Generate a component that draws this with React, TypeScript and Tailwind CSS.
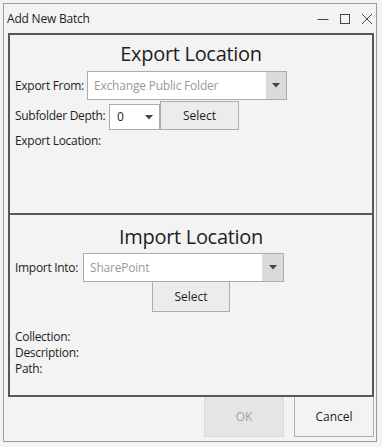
import React from "react";

const font = { fontFamily: '"Open Sans", "Noto Sans", sans-serif' };

function Arrow() {
  return (
    <svg width="8" height="5" viewBox="0 0 8 5">
      <path d="M0 0 L8 0 L4 4.5 Z" fill="#444" />
    </svg>
  );
}

export default function App() {
  return (
    <div
      className="w-[382px] h-[447px] bg-[#f3f3f3] pt-[3px] pl-[3px] text-[12px] text-[#1e1e1e] leading-[16px]"
      style={font}
    >
      <div className="w-[374px] h-[439px] border border-[#9c9c9c] flex flex-col">
        {/* title bar */}
        <div className="h-[29px] flex items-center pl-[3px] pr-[2px]">
          <span className="text-[12px] tracking-[-0.2px]">Add New Batch</span>
          <div className="ml-auto flex items-center gap-[10px] pr-[1px]">
            <svg width="12" height="12" viewBox="0 0 12 12">
              <path d="M0.5 6.5 H11.5" stroke="#444" strokeWidth="1" />
            </svg>
            <svg width="12" height="12" viewBox="0 0 12 12">
              <rect x="1.5" y="1.5" width="9" height="9" fill="none" stroke="#444" strokeWidth="1" />
            </svg>
            <svg width="12" height="12" viewBox="0 0 12 12">
              <path d="M1 1 L11 11 M11 1 L1 11" stroke="#444" strokeWidth="1" />
            </svg>
          </div>
        </div>

        {/* panel */}
        <div className="ml-[4px] w-[366px] border-2 border-[#575757] flex flex-col">
          {/* export */}
          <div className="h-[178px] flex flex-col pl-[5px]">
            <div className="h-[28px] mt-[5px] flex items-center justify-center text-[20px] leading-[28px] tracking-[-0.3px] pr-[5px]">
              Export Location
            </div>
            <div className="mt-[3px] flex items-center">
              <span className="w-[72px] tracking-[-0.3px]">Export From:</span>
              <div className="w-[200px] h-[29px] bg-white border border-[#acacac] flex items-stretch">
                <div className="flex-1 flex items-center pl-[6px] text-[#9a9a9a] tracking-[-0.2px]">
                  Exchange Public Folder
                </div>
                <div className="w-[20px] bg-[#dadada] flex items-center justify-center">
                  <Arrow />
                </div>
              </div>
            </div>
            <div className="mt-[1px] flex items-center">
              <span className="w-[94px] tracking-[-0.3px]">Subfolder Depth:</span>
              <div className="w-[51px] h-[26px] mt-[3px] bg-white border border-[#acacac] flex items-center pl-[7px] pr-[6px]">
                <span>0</span>
                <span className="ml-auto flex items-center">
                  <Arrow />
                </span>
              </div>
              <div className="w-[79px] h-[29px] bg-[#ececec] border border-[#adadad] flex items-center justify-center">
                Select
              </div>
            </div>
            <div className="mt-[3px] tracking-[-0.3px]">Export Location:</div>
          </div>
          <div className="h-[2px] bg-[#575757]" />
          {/* import */}
          <div className="h-[180px] flex flex-col pl-[5px]">
            <div className="h-[28px] mt-[8px] flex items-center justify-center text-[20px] leading-[28px] tracking-[-0.3px] pr-[5px]">
              Import Location
            </div>
            <div className="mt-[2px] flex items-center">
              <span className="w-[68px] tracking-[-0.3px]">Import Into:</span>
              <div className="w-[201px] h-[29px] bg-white border border-[#acacac] flex items-stretch">
                <div className="flex-1 flex items-center pl-[6px] text-[#9a9a9a] tracking-[-0.2px]">
                  SharePoint
                </div>
                <div className="w-[21px] bg-[#dadada] flex items-center justify-center">
                  <Arrow />
                </div>
              </div>
            </div>
            <div className="ml-[137px] w-[78px] h-[30px] bg-[#ececec] border border-[#adadad] border-t-0 flex items-center justify-center">
              Select
            </div>
            <div className="mt-[17px] tracking-[-0.3px]">Collection:</div>
            <div className="tracking-[-0.3px]">Description:</div>
            <div className="tracking-[-0.3px]">Path:</div>
          </div>
        </div>

        {/* buttons */}
        <div className="flex justify-end gap-[10px] pr-[2px]">
          <div className="w-[80px] h-[40px] bg-[#e5e5e5] border border-[#dadada] border-t-0 flex items-center justify-center text-[#a3a3a3]">
            OK
          </div>
          <div className="w-[80px] h-[40px] bg-[#f3f3f3] border border-[#adadad] border-t-0 flex items-center justify-center">
            Cancel
          </div>
        </div>
      </div>
    </div>
  );
}
